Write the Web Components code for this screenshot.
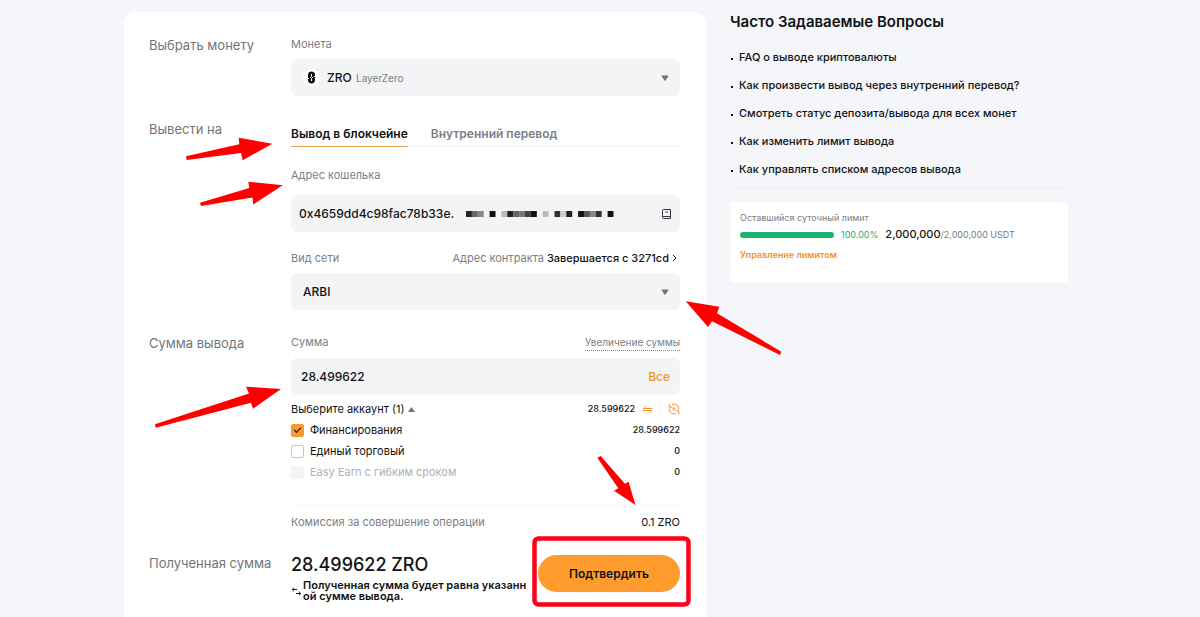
<!DOCTYPE html>
<html lang="ru">
<head>
<meta charset="utf-8">
<meta name="viewport" content="width=device-width, initial-scale=1">
<title>Вывод ZRO</title>
<style>
  body {
    margin: 0;
    background: #f5f6fa;
    color: #121214;
    font-family: Inter, "Liberation Sans", sans-serif;
    font-size: 11px;
    line-height: 16px;
  }
</style>
</head>
<body>
<withdraw-page>
  <withdraw-form></withdraw-form>
  <faq-list slot="aside" heading="Часто Задаваемые Вопросы">
    <a href="#faq">FAQ о выводе криптовалюты</a>
    <a href="#internal">Как произвести вывод через внутренний перевод?</a>
    <a href="#status">Смотреть статус депозита/вывода для всех монет</a>
    <a href="#limit">Как изменить лимит вывода</a>
    <a href="#book">Как управлять списком адресов вывода</a>
  </faq-list>
  <limit-card slot="aside"></limit-card>
  <guide-marks slot="marks"></guide-marks>
</withdraw-page>

<script>
function render(el, html) {
  const template = document.createElement("template");
  template.innerHTML = html;
  el.attachShadow({ mode: "open" }).appendChild(template.content.cloneNode(true));
}

class WithdrawPage extends HTMLElement {
  constructor() {
    super();
    render(this, `
      <style>
        :host {
          display: block;
          position: relative;
          overflow: hidden;
        }
        .columns {
          display: grid;
          grid-template-columns: minmax(0, 582fr) minmax(0, 338fr);
          gap: 24px;
          padding: 12px 132px 0 124px;
        }
        aside {
          display: flex;
          flex-direction: column;
        }
      </style>
      <div class="columns">
        <main><slot></slot></main>
        <aside><slot name="aside"></slot></aside>
      </div>
      <slot name="marks"></slot>
    `);
  }
}

class FormRow extends HTMLElement {
  constructor() {
    super();
    render(this, `
      <style>
        :host {
          display: grid;
          grid-template-columns: 142px minmax(0, 1fr);
        }
        .name {
          color: #71757a;
          font-size: 13px;
          line-height: 18px;
        }
      </style>
      <div class="name"></div>
      <div><slot></slot></div>
    `);
    this.shadowRoot.querySelector(".name").textContent = this.getAttribute("name");
  }
}

class WithdrawForm extends HTMLElement {
  constructor() {
    super();
    render(this, `
      <style>
        :host {
          display: block;
          box-sizing: border-box;
          min-height: 620px;
          padding: 24px 26px 16px 25px;
          border-radius: 12px;
          background: #fff;
        }
        form {
          display: flex;
          flex-direction: column;
          gap: 24px;
        }
        button, input, select {
          margin: 0;
          padding: 0;
          border: 0;
          background: none;
          color: inherit;
          font: inherit;
        }
        button, select { cursor: pointer; }
        a { color: inherit; text-decoration: none; }
        .caption {
          display: flex;
          justify-content: space-between;
          color: #7a7e85;
          line-height: 16px;
          margin-bottom: 7px;
        }
        .caption a { color: #121214; font-weight: 500; }
        .contract { display: flex; gap: 3px; padding-right: 3px; }
        .contract a { display: flex; align-items: center; gap: 3px; }
        .caption .dotted {
          color: #7a7e85;
          font-size: 10px;
          font-weight: 400;
          border-bottom: 1px dotted #81858c;
        }
        .field {
          display: flex;
          align-items: center;
          height: 37px;
          border-radius: 6px;
          background: #f3f4f6;
          font-size: 12px;
          font-weight: 500;
        }
        .stack { display: grid; grid-template-columns: minmax(0, 1fr); }
        .stack > * { grid-area: 1 / 1; }
        .stack select {
          appearance: none;
          width: 100%;
          height: 37px;
          padding-left: 12px;
        }
        .stack .with-icon { padding-left: 36px; }
        .decor {
          display: flex;
          align-items: center;
          pointer-events: none;
          padding: 0 11px 0 12px;
        }
        .coin-name {
          margin-left: 36px;
          color: #7a7e85;
          font-size: 10px;
          font-weight: 400;
        }
        .caret { margin-left: auto; }
        svg { display: block; flex: none; }
        .tabs {
          display: flex;
          gap: 23px;
          margin: 5px 0 20px;
          box-shadow: inset 0 -1px #f1f2f4;
        }
        .tabs button {
          padding: 0 0 3px;
          color: #7a7e85;
          font-size: 12px;
          font-weight: 600;
          line-height: 18px;
          border-bottom: 1px solid transparent;
        }
        .tabs button[aria-selected="true"] {
          color: #121214;
          border-color: #f0a04b;
        }
        .first { margin-bottom: 12px; }
        .second { margin-top: 18px; }
        .address { gap: 4px; padding: 0 8px; }
        .address input { flex: none; width: 163px; }
        .address button { margin-left: auto; }
        .amount { padding: 0 10px; }
        .amount input { flex: 1; min-width: 0; }
        .amount button { color: #f7931e; }
        .accounts {
          display: flex;
          flex-direction: column;
          gap: 5px;
          margin-top: 6px;
        }
        .line, .line label, .line .tools {
          display: flex;
          align-items: center;
        }
        .line { justify-content: space-between; }
        .line label { gap: 6px; }
        .line output { font-size: 9px; font-weight: 500; }
        .toggle { display: flex; align-items: center; gap: 4px; }
        .tools { gap: 7px; }
        .tools i { width: 1px; height: 12px; background: #f0f1f3; }
        input[type="checkbox"] {
          appearance: none;
          box-sizing: border-box;
          width: 13px;
          height: 13px;
          border: 1px solid #c4c7cc;
          border-radius: 2px;
          display: grid;
          place-items: center;
        }
        input[type="checkbox"]:checked {
          background: #f79b2c;
          border-color: #f79b2c;
        }
        input[type="checkbox"]:checked::before {
          content: "";
          width: 6px;
          height: 3px;
          margin-bottom: 2px;
          border: solid #121214;
          border-width: 0 0 1px 1px;
          transform: rotate(-45deg);
        }
        input[type="checkbox"]:disabled {
          background: #f3f4f6;
          border-color: #f3f4f6;
        }
        .off { color: #adb1b8; }
        .fee {
          margin-top: 25px;
          padding-top: 8px;
          border-top: 1px solid #f6f7f8;
          color: #7a7e85;
        }
        .line.fee output { color: #121214; font-size: 11px; font-weight: 400; }
        .result {
          display: flex;
          align-items: flex-start;
          justify-content: space-between;
          gap: 8px;
          padding-top: 1px;
        }
        .sum { font-size: 18px; line-height: 20px; font-weight: 500; }
        .note {
          display: flex;
          align-items: center;
          gap: 1px;
          margin-top: 5px;
          line-height: 11px;
          font-weight: 600;
        }
        .note span { word-break: break-all; }
        .submit {
          flex: none;
          width: 142px;
          height: 37px;
          border-radius: 19px;
          background: #ff9c2e;
          font-size: 12px;
          font-weight: 600;
        }
      </style>
      <form>
        <form-row name="Выбрать монету">
          <label class="caption" for="coin">Монета</label>
          <div class="field stack">
            <select id="coin" class="with-icon"><option>ZRO</option></select>
            <div class="decor">
              <svg width="17" height="17" viewBox="0 0 17 17">
                <circle cx="8.500" cy="8.500" r="8.500" fill="#fff"/>
                <path d="M5 5.500C5 1.600 12 1.600 12 5.500V11.500C12 15.400 5 15.400 5 11.500Z" fill="#111"/>
                <path d="M8.500 5V7.500L7 9M8.500 12V9.500L10 8M4.500 9.500H6M11 7.500h1.500" fill="none" stroke="#fff"/>
              </svg>
              <span class="coin-name">LayerZero</span>
              <svg class="caret" width="8" height="6" viewBox="0 0 8 6"><path d="M1 .5h6a.5.5 0 0 1 .4.8L4.500 5.500a.6.6 0 0 1-1 0L.6 1.300A.5.5 0 0 1 1 .5Z" fill="#71757a"/></svg>
            </div>
          </div>
        </form-row>

        <form-row name="Вывести на">
          <div class="tabs" role="tablist">
            <button type="button" role="tab" aria-selected="true">Вывод в блокчейне</button>
            <button type="button" role="tab" aria-selected="false">Внутренний перевод</button>
          </div>
          <label class="caption first" for="address">Адрес кошелька</label>
          <div class="field address">
            <input id="address" value="0x4659dd4c98fac78b33e.">
            <svg class="mask" width="150" height="6" viewBox="0 0 150 6"></svg>
            <button type="button" aria-label="Адресная книга">
              <svg width="11" height="12" viewBox="0 0 11 12" fill="none" stroke="#33363b">
                <path d="M2.500 1.500h7v9h-7A1 1 0 0 1 1.500 9.500v-7A1 1 0 0 1 2.500 1.500ZM1.500 8.500h8M4.500 4h2.500"/>
              </svg>
            </button>
          </div>
          <div class="caption second">
            <label for="chain">Вид сети</label>
            <span class="contract">
              <span>Адрес контракта</span>
              <a href="#contract">Завершается с 3271cd
                <svg width="5" height="8" viewBox="0 0 5 8" fill="none" stroke="#121214"><path d="M1 1 4 4 1 7"/></svg>
              </a>
            </span>
          </div>
          <div class="field stack">
            <select id="chain"><option>ARBI</option></select>
            <div class="decor">
              <svg class="caret" width="8" height="6" viewBox="0 0 8 6"><path d="M1 .5h6a.5.5 0 0 1 .4.8L4.500 5.500a.6.6 0 0 1-1 0L.6 1.300A.5.5 0 0 1 1 .5Z" fill="#71757a"/></svg>
            </div>
          </div>
        </form-row>

        <form-row name="Сумма вывода">
          <div class="caption">
            <label for="amount">Сумма</label>
            <a class="dotted" href="#raise">Увеличение суммы</a>
          </div>
          <div class="field amount">
            <input id="amount" inputmode="decimal" value="28.499622">
            <button type="button">Все</button>
          </div>
          <div class="accounts">
            <div class="line">
              <button type="button" class="toggle">Выберите аккаунт (1)
                <svg width="7" height="5" viewBox="0 0 7 5"><path d="M3.500 0 7 5H0Z" fill="#71757a"/></svg>
              </button>
              <span class="tools">
                <output>28.599622</output>
                <svg width="11" height="9" viewBox="0 0 11 9" fill="none" stroke="#f58f2a"><path d="M10.500 3.500H1L3.800.8M.5 5.500H10L7.200 8.200"/></svg>
                <i></i>
                <svg width="12" height="12" viewBox="0 0 12 12" fill="none" stroke="#f58f2a">
                  <path d="M4 1.500A4.800 4.800 0 0 1 10.800 6.500M8 10.500A4.800 4.800 0 0 1 1.200 5.500M1.200 1v3.200h3.200M10.800 11v-3.200H7.600"/>
                  <circle cx="6" cy="6" r="1"/>
                </svg>
              </span>
            </div>
            <div class="line">
              <label><input type="checkbox" checked>Финансирования</label>
              <output>28.599622</output>
            </div>
            <div class="line">
              <label><input type="checkbox">Единый торговый</label>
              <output>0</output>
            </div>
            <div class="line">
              <label class="off"><input type="checkbox" disabled>Easy Earn с гибким сроком</label>
              <output>0</output>
            </div>
          </div>
          <div class="line fee">
            <span>Комиссия за совершение операции</span>
            <output>0.1 ZRO</output>
          </div>
        </form-row>

        <form-row name="Полученная сумма">
          <div class="result">
            <div>
              <div class="sum">28.499622 ZRO</div>
              <div class="note">
                <svg width="11" height="9" viewBox="0 0 11 9" fill="none" stroke="#121214"><path d="M6 2.500H1.500M3 .8 1.200 2.500 3 4.200M5 6.500H9.500M8 4.800 9.800 6.500 8 8.200"/></svg>
                <span>Полученная сумма будет равна указанной сумме вывода.</span>
              </div>
            </div>
            <button type="submit" class="submit">Подтвердить</button>
          </div>
        </form-row>
      </form>
    `);
    this.drawMask();
    this.shadowRoot.querySelector("form").addEventListener("submit", (e) => e.preventDefault());
    const tabs = this.shadowRoot.querySelectorAll("[role=tab]");
    tabs.forEach((tab) => {
      tab.addEventListener("click", () => {
        tabs.forEach((t) => t.setAttribute("aria-selected", t === tab));
      });
    });
  }

  // hidden part of the address, one square per character cell
  drawMask() {
    const cells = ["#222", "#666", "#888", "", "#111", "", "#bbb", "#222", "#666", "#777", "#444", "#111", "",
      "#bbb", "", "#333", "#ccc", "#222", "", "#111", "#555", "#888", "#333", "", "#111"];
    this.shadowRoot.querySelector(".mask").innerHTML = cells
      .map((fill, i) => (fill ? `<rect x="${i * 5.9}" width="5.9" height="6" fill="${fill}"/>` : ""))
      .join("");
  }
}

class FaqList extends HTMLElement {
  constructor() {
    super();
    render(this, `
      <style>
        :host {
          display: block;
          padding-bottom: 11px;
          border-bottom: 1px solid #eceef1;
        }
        h2 {
          margin: 0 0 17px;
          font-size: 15px;
          line-height: 20px;
          font-weight: 600;
        }
        ul {
          display: flex;
          flex-direction: column;
          gap: 12px;
          margin: 0;
          padding: 0;
          list-style: none;
          font-weight: 500;
        }
        li {
          display: flex;
          align-items: center;
          gap: 6px;
        }
        li::before {
          content: "";
          width: 2px;
          height: 2px;
          margin: 3px 0 0 1px;
          background: #121214;
        }
        a { color: inherit; text-decoration: none; }
      </style>
      <h2></h2>
      <ul></ul>
    `);
    this.shadowRoot.querySelector("h2").textContent = this.getAttribute("heading");
    const list = this.shadowRoot.querySelector("ul");
    this.querySelectorAll("a").forEach((link) => {
      const item = document.createElement("li");
      item.appendChild(link);
      list.appendChild(item);
    });
  }
}

class LimitCard extends HTMLElement {
  constructor() {
    super();
    render(this, `
      <style>
        :host {
          display: block;
          margin-top: 13px;
          padding: 8px 10px 19px;
          border-radius: 4px;
          background: #fff;
          color: #7a7e85;
          font-size: 9px;
        }
        .usage {
          display: flex;
          align-items: center;
          gap: 7px;
          margin: 0 0 4px;
        }
        .bar {
          width: 94px;
          height: 6px;
          border-radius: 3px;
          background: #20b26c;
        }
        .percent { color: #20b26c; }
        b { color: #121214; font-size: 11px; font-weight: 500; }
        a { color: #f7931e; font-weight: 600; text-decoration: none; }
      </style>
      <div>Оставшийся суточный лимит</div>
      <div class="usage">
        <span class="bar"></span>
        <span class="percent">100.00%</span>
        <span><b>2,000,000</b>/2,000,000 USDT</span>
      </div>
      <a href="#manage">Управление лимитом</a>
    `);
  }
}

// red arrows and frame drawn over the form
class GuideMarks extends HTMLElement {
  constructor() {
    super();
    render(this, `
      <style>
        :host {
          display: block;
          position: absolute;
          inset: 0;
          pointer-events: none;
        }
        svg { display: block; width: 100%; height: 100%; }
      </style>
      <svg fill="#fe0000" aria-hidden="true">
        <path d="M186 156.300 239.300 144.300 238.700 137.700 272.300 143.700 242.700 160.300 241 153 186.700 160Z"/>
        <path d="M200 202.700 249.300 188 248.300 181.700 282.700 185.200 253.300 204.500 252.500 197.500 201 206Z"/>
        <path d="M685.700 301.300 719.300 306.700 717 313.300 781.300 351.700 780 355 712 321.300 708 327Z"/>
        <path d="M155 424.300 249 393.500 246 386.700 281 389 253 408.700 251 402.700 155.700 427.700Z"/>
        <path d="M597.300 457.700 600.700 456 625 483.700 628.500 481.700 635.500 505 614 490.700 618.300 488.300Z"/>
        <rect x="534.500" y="538.500" width="154" height="66" rx="4" fill="none" stroke="#fe0019" stroke-width="4.500"/>
      </svg>
    `);
  }
}

customElements.define("form-row", FormRow);
customElements.define("withdraw-form", WithdrawForm);
customElements.define("faq-list", FaqList);
customElements.define("limit-card", LimitCard);
customElements.define("guide-marks", GuideMarks);
customElements.define("withdraw-page", WithdrawPage);
</script>
</body>
</html>
